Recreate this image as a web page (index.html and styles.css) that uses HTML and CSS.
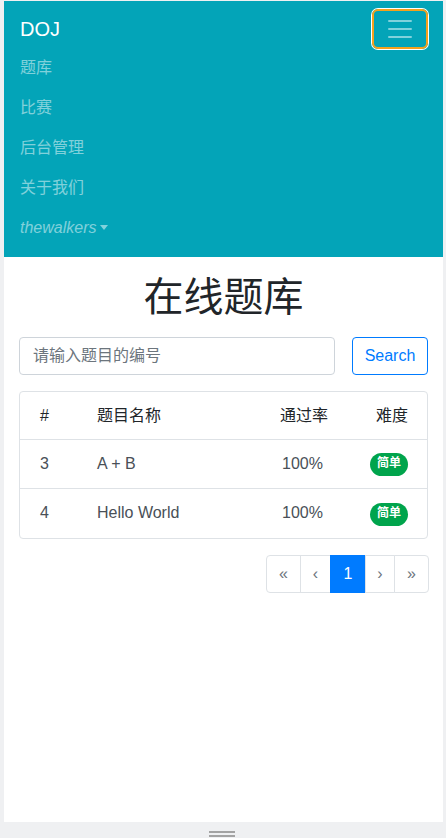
FILE: index.html
```html
<!DOCTYPE html>
<html lang="zh">
<head>
<meta charset="utf-8">
<title>DOJ</title>
<link rel="stylesheet" href="styles.css">
</head>
<body>
<div class="screen">
  <nav class="navbar">
    <div class="nav-top">
      <span class="brand">DOJ</span>
      <button class="toggler" type="button" aria-label="menu">
        <svg width="30" height="30" viewBox="0 0 30 30"><path d="M4 7h22M4 15h22M4 23h22" stroke="rgba(255,255,255,0.5)" stroke-width="2" stroke-linecap="round"/></svg>
      </button>
    </div>
    <ul class="nav-list">
      <li class="nav-link">题库</li>
      <li class="nav-link">比赛</li>
      <li class="nav-link">后台管理</li>
      <li class="nav-link">关于我们</li>
      <li class="nav-link user">thewalkers<span class="caret"></span></li>
    </ul>
  </nav>
  <main class="container">
    <h1 class="title">在线题库</h1>
    <form class="search">
      <input class="search-input" type="text" placeholder="请输入题目的编号">
      <button class="search-btn" type="button">Search</button>
    </form>
    <div class="table-wrap">
      <table class="table">
        <colgroup><col class="c1"><col class="c2"><col class="c3"><col class="c4"></colgroup>
        <thead>
          <tr><th>#</th><th>题目名称</th><th>通过率</th><th class="right">难度</th></tr>
        </thead>
        <tbody>
          <tr><td>3</td><td>A + B</td><td class="rate">100%</td><td class="right"><span class="badge">简单</span></td></tr>
          <tr><td>4</td><td>Hello World</td><td class="rate">100%</td><td class="right"><span class="badge">简单</span></td></tr>
        </tbody>
      </table>
    </div>
    <div class="pager-row">
      <ul class="pagination">
        <li class="page p1">«</li>
        <li class="page p2">‹</li>
        <li class="page p3 active">1</li>
        <li class="page p4">›</li>
        <li class="page p5">»</li>
      </ul>
    </div>
  </main>
</div>
<div class="bottom-bar"><span class="handle"></span></div>
</body>
</html>
```

FILE: styles.css
```css
* { box-sizing: border-box; }
html, body { margin: 0; padding: 0; }
body {
  background: #eff0f2;
  font-family: "Liberation Sans", "Noto Sans CJK SC", sans-serif;
  font-size: 16px;
  line-height: 1.5;
  color: #212529;
  width: 446px;
  height: 838px;
  overflow: hidden;
}
.screen {
  margin: 1px 3px 0 4px;
  height: 821px;
  background: #fff;
  overflow: hidden;
}
.navbar {
  background: #03a4b8;
  padding: 8px 16px;
  height: 256px;
}
.nav-top {
  display: flex;
  justify-content: space-between;
  align-items: center;
  height: 40px;
}
.brand {
  color: #fff;
  font-size: 20px;
  line-height: 30px;
}
.toggler {
  width: 56px;
  height: 40px;
  margin-right: -1px;
  padding: 0;
  background: transparent;
  border: 2px solid #f5a11c;
  border-radius: 6px;
  box-shadow: 0 0 0 1px #fff;
  display: flex;
  align-items: center;
  justify-content: center;
}
.toggler svg { display: block; }
.nav-list {
  list-style: none;
  margin: 0;
  padding: 0;
}
.nav-link {
  color: rgba(255, 255, 255, 0.5);
  line-height: 24px;
  padding: 8px 0;
  margin-top: -1px;
  margin-bottom: 1px;
}
.nav-link.user { font-style: italic; }
.caret {
  display: inline-block;
  margin-left: 4px;
  vertical-align: 3px;
  border-top: 5px solid rgba(255, 255, 255, 0.5);
  border-left: 4px solid transparent;
  border-right: 4px solid transparent;
}
.container {
  padding: 0 15px;
}
.title {
  margin: 16px 0 16px;
  text-align: center;
  font-size: 40px;
  font-weight: 400;
  line-height: 48px;
  color: #212529;
}
.search {
  display: flex;
  gap: 17px;
  margin: 0 0 16px;
}
.search-input {
  flex: 1;
  height: 38px;
  border: 1px solid #ced4da;
  border-radius: 4px;
  padding: 6px 13px;
  font: inherit;
  color: #495057;
}
.search-input::placeholder { color: #6c757d; }
.search-btn {
  width: 76px;
  height: 38px;
  border: 1px solid #007bff;
  border-radius: 4px;
  background: #fff;
  color: #007bff;
  font: inherit;
  padding: 0;
}
.table-wrap {
  border: 1px solid #dee2e6;
  border-radius: 4px;
  overflow: hidden;
}
.table {
  width: 100%;
  border-collapse: collapse;
  table-layout: fixed;
}
.c1 { width: 57px; }
.c2 { width: 183px; }
.c3 { width: 90px; }
.c4 { width: 77px; }
.table th, .table td {
  padding: 12px 0 12px 20px;
  line-height: 24px;
  text-align: left;
  font-weight: 400;
  white-space: nowrap;
}
.table th { color: #212529; padding-bottom: 11px; }
.table td { color: #495057; border-top: 1px solid #dee2e6; }
.table td.rate { padding-left: 22px; }
.table .right { text-align: right; padding-left: 0; padding-right: 19px; }
.badge {
  display: inline-block;
  background: #00a44c;
  color: #fff;
  font-size: 12px;
  font-weight: 700;
  line-height: 14px;
  padding: 3px 7px 6px;
  border-radius: 12px;
  vertical-align: middle;
}
.pager-row {
  display: flex;
  justify-content: flex-end;
  margin-top: 16px;
}
.pagination {
  display: flex;
  list-style: none;
  margin: 0 -1px 0 0;
  padding: 0;
}
.page {
  border: 1px solid #dee2e6;
  margin-left: -1px;
  padding: 8px 0;
  line-height: 20px;
  color: #6c757d;
  background: #fff;
  text-align: center;
}
.p1 { width: 35px; margin-left: 0; border-radius: 4px 0 0 4px; }
.p2 { width: 31px; }
.p3 { width: 36px; }
.p4 { width: 30px; }
.p5 { width: 35px; border-radius: 0 4px 4px 0; }
.page.active {
  background: #007bff;
  border-color: #007bff;
  color: #fff;
}
.bottom-bar {
  height: 16px;
  display: flex;
  justify-content: center;
  padding-top: 9px;
}
.handle {
  display: block;
  width: 26px;
  height: 6px;
  margin-left: -2px;
  border-top: 2px solid #a3a3a3;
  border-bottom: 2px solid #a3a3a3;
}
```
